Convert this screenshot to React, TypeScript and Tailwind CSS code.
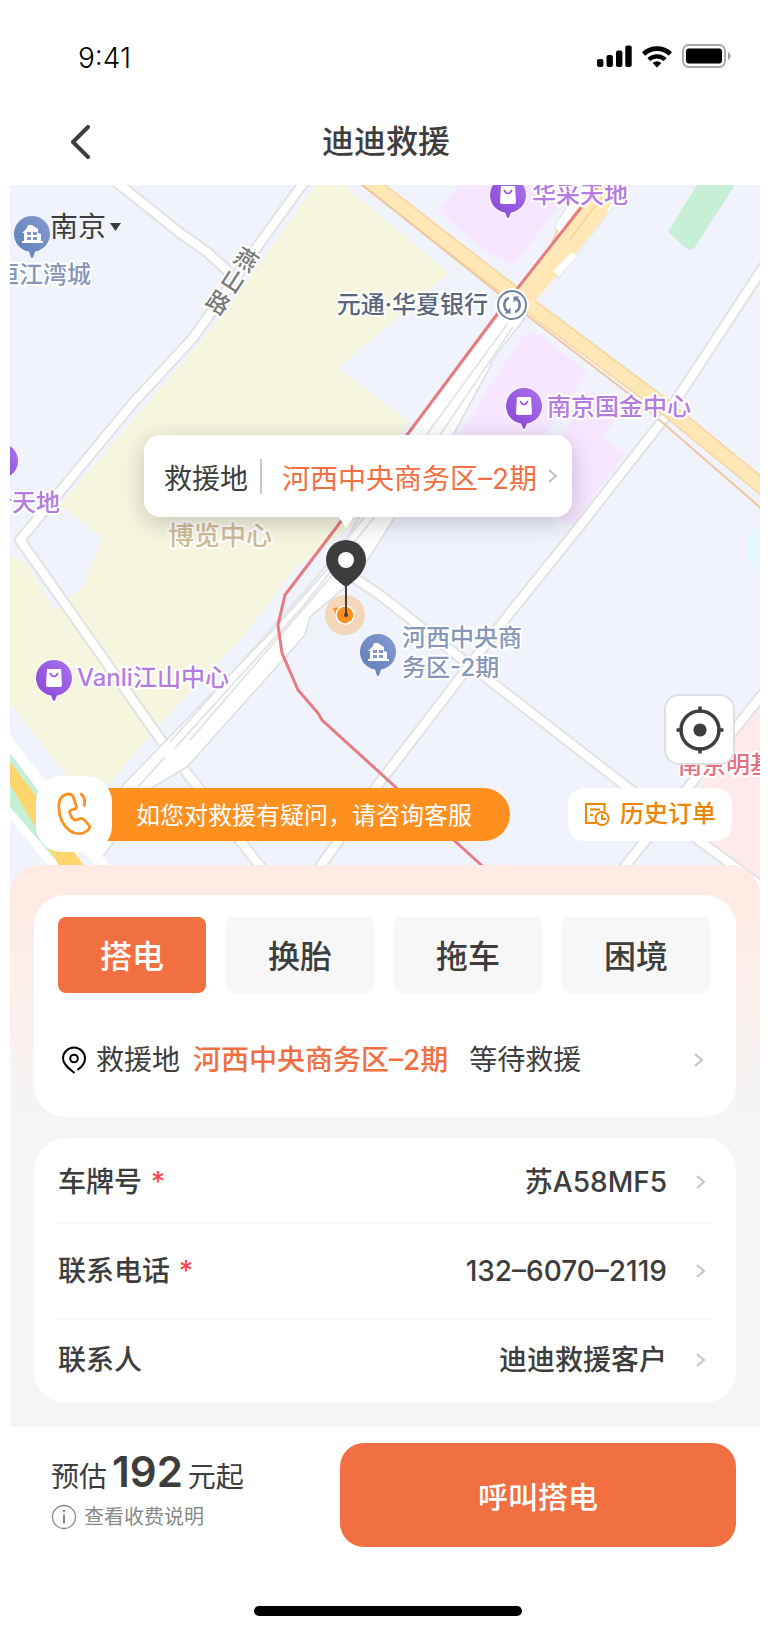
import React, { useState } from "react";

const services = ["搭电", "换胎", "拖车", "困境"];

const details = [
  { label: "车牌号", value: "苏A58MF5", required: true, height: "h-[84px] pt-1" },
  { label: "联系电话", value: "132–6070–2119", required: true, height: "h-24" },
  { label: "联系人", value: "迪迪救援客户", required: false, height: "h-[85px] pb-1" },
];

function Chevron() {
  return (
    <svg viewBox="0 0 10 14" className="h-[14px] w-[10px] shrink-0" fill="none" stroke="#c4c4c4" strokeWidth="2" aria-hidden="true">
      <path d="M1 1l7 6-7 6" />
    </svg>
  );
}

function StatusBar() {
  return (
    <div className="flex h-[82px] items-center justify-between pt-8 pr-[29px] pl-[68px]">
      <span className="pt-0.5 text-[28px] leading-none font-light text-black">9:41</span>
      <div className="flex items-center gap-[9px] pb-0.5">
        <svg viewBox="0 0 35 22" className="h-[22px] w-[35px]" aria-hidden="true">
          <rect x="0" y="14" width="6.400" height="8" rx="2" />
          <rect x="9.500" y="10" width="6.400" height="12" rx="2" />
          <rect x="19" y="5.500" width="6.400" height="16.500" rx="2" />
          <rect x="28.300" y="0.600" width="6.400" height="21.400" rx="2" />
        </svg>
        <svg viewBox="0 0 32 23" className="h-[23px] w-8" fill="none" stroke="#000" aria-hidden="true">
          <path d="M2.600 9a19.500 19.500 0 0 1 26.800 0" strokeWidth="4.600" />
          <path d="M7.800 14.600a11.900 11.900 0 0 1 16.400 0" strokeWidth="4.200" />
          <path d="M16 22.600l-4.400-4.600a6.500 6.500 0 0 1 8.800 0z" fill="#000" stroke="none" />
        </svg>
        <svg viewBox="0 0 49 24" className="h-6 w-[49px]" aria-hidden="true">
          <rect x="1" y="1" width="42" height="22" rx="5.500" fill="none" stroke="#a6a6a6" strokeWidth="1.800" />
          <rect x="4" y="4.500" width="36" height="15" rx="3" />
          <path d="M46 8v8c3.500-1.500 3.500-6.500 0-8z" fill="#a6a6a6" />
        </svg>
      </div>
    </div>
  );
}

function ShopPin({ x, y }: { x: number; y: number }) {
  return (
    <g transform={`translate(${x} ${y})`}>
      <path d="M0 25c-2 0-2.500-3-3.500-6C-13 17-19 9-19 0A19 19 0 0 1 19 0C19 9 13 17 3.500 19 2.500 22 2 25 0 25z" fill="#fff" opacity=".7" />
      <path d="M0 23c-1.500 0-1.500-3-3-5.500C-12 16-18 8.500-18 0a18 18 0 0 1 36 0C18 8.500 12 16 3 17.500 1.500 20 1.500 23 0 23z" fill="url(#shop)" />
      <path d="M-7-9H7L8 7q0 2-2 2H-6q-2 0-2-2z" fill="#fff" />
      <path d="M-4-5q4 7 8 0" fill="none" stroke="#9a5ae0" strokeWidth="1.600" />
    </g>
  );
}

function HomePin({ x, y }: { x: number; y: number }) {
  return (
    <g transform={`translate(${x} ${y})`}>
      <path d="M0 24c-1.500 0-1.500-3-3-6.500C-12 16-18 8.500-18 0a18 18 0 0 1 36 0C18 8.500 12 16 3 17.500 1.500 21 1.500 24 0 24z" fill="url(#home)" />
      <path d="M-10 7h2V-1h-2L-5-6l1-3h4l6 4v4l3 1v7h2v2h-21z" fill="#fff" />
      <path d="M-5-2h4v3h-4zM1-2h4v3H1zM-5 3h4v3h-4zM1 3h4v3H1z" fill="#7f97cb" />
    </g>
  );
}

const minorRoads = [
  "M105-4L170 48 197 67 218 86",
  "M295-4L247 62 203 125 183 153 123 218 57 298 10 355 153 558",
  "M340 390L370 410 430 457 617 602 760 708",
  "M760 72L653 235 573 337 500 428 370 597 300 696",
  "M173 583L262 696",
  "M760 500L600 700",
];

function MapDrawing() {
  return (
    <svg viewBox="0 0 750 710" preserveAspectRatio="xMidYMin slice" className="absolute inset-0 h-full w-full" aria-hidden="true">
      <defs>
        <linearGradient id="shop" x1="1" y1="0" x2="0" y2="1">
          <stop offset="0" stopColor="#a873ee" />
          <stop offset="1" stopColor="#8a43d4" />
        </linearGradient>
        <linearGradient id="home" x1="1" y1="0" x2="0" y2="1">
          <stop offset="0" stopColor="#869bd2" />
          <stop offset="1" stopColor="#5d7db8" />
        </linearGradient>
      </defs>
      <rect width="750" height="710" fill="#f0f3fb" />
      <path d="M305 0H333L370 30 439 88 370 147 328 183 398 235 340 342 283 385 267 408 230 455 203 482 147 542 100 598 57 592 0 518V374L5 372 15 377 45 425 73 403 92 352 50 320 117 242 203 142 283 32z" fill="#f6f6df" />
      <path d="M450 0L428 25 473 65 503 80 547 25 555 0z" fill="#f6e6ff" />
      <path d="M514 150Q520 146 530 150L578 188 535 250 447 252 497 175z" fill="#f6e6ff" />
      <path d="M577 208H597L610 228 593 253 615 268 566 336Q560 343 552 337L540 320 552 250z" fill="#f6e6ff" />
      <path d="M687 0H725L685 62Q682 67 676 63L658 47z" fill="#c5f0d5" />
      <path d="M750 340L738 353V375L750 387z" fill="#e2f8fc" />
      <path d="M750 522L727 548 690 602 693 655 750 698z" fill="#ffeaeb" />

      <path d="M0 550L35 595 70 650 66 690H46L0 634z" fill="#fff" />
      <path d="M0 568L28 605 60 650 56 684 48 678 0 622z" fill="#c5f0d5" />
      <path d="M0 577L27 612 80 690H55L0 600z" fill="#ffd66e" />

      <g fill="none" stroke="#e1e2e4" strokeWidth="12" strokeLinejoin="round">
        {minorRoads.map((d) => <path key={d} d={d} />)}
      </g>
      <g fill="none" stroke="#fff" strokeWidth="8" strokeLinejoin="round">
        {minorRoads.map((d) => <path key={d} d={d} />)}
      </g>

      <path d="M490 128L397 250 323 378 263 445 113 600 78 665 90 676 143 602 177 582 295 450 300 432 347 392 383 335 443 250 480 182 482 175 515 133z" fill="#fff" stroke="#dcdee1" strokeWidth="1.500" />
      <path d="M498 138L380 300 300 400 160 557M503 142L430 250 290 425 165 563" fill="none" stroke="#e4e5e8" strokeWidth="2" />
      <path d="M350 358L180 555M155 572L128 602" fill="none" stroke="#e4e5e8" strokeWidth="2" />
      <path d="M80 664L104 696" stroke="#fff" strokeWidth="12" />

      <path d="M345-14L503 108 650 218 760 308" fill="none" stroke="#fbd3a0" strokeWidth="16" />
      <path d="M345-14L503 108 650 218 760 308" fill="none" stroke="#ffe8b5" strokeWidth="13" />
      <path d="M345-6L493 112 623 212 760 331" fill="none" stroke="#eec6a0" strokeWidth="2" />
      <path d="M545 78L546 38 572 0H620L548 94z" fill="#fff" stroke="#dcdee1" />
      <path d="M505 110L552 45 583 0H609L596 30 565 70 523 118z" fill="#ffe8b5" />
      <path d="M562 67L567 71 549 91 543 86z" fill="#fff" />
      <path d="M592 12L560 54M548 45L540 62" stroke="#fbd3a0" strokeWidth="2" />
      <path d="M592-4L488 128 397 250 332 335 275 410 268 440 272 468 288 505 308 528 312 535 380 597 480 688" fill="none" stroke="#e67b82" strokeWidth="3" />

      <circle cx="502" cy="120" r="17" fill="#fff" />
      <circle cx="502" cy="120" r="14" fill="#fff" stroke="#76859e" strokeWidth="2" />
      <path d="M499 113C493 115 493 124 498 126.500M505 127C511 125 511 116 506 113.500" fill="none" stroke="#6f80a4" strokeWidth="2.600" />
      <path d="M494.500 128.500h6v-6zM509.500 111.500h-6v6z" fill="#6f80a4" />

      <ShopPin x={498} y={10} />
      <ShopPin x={514} y={221} />
      <ShopPin x={-10} y={276} />
      <ShopPin x={44} y={493} />
      <HomePin x={22} y={49} />
      <HomePin x={368} y={467} />

      <g stroke="#fff" strokeWidth="4" strokeLinejoin="round" paintOrder="stroke" fontSize="24" fontWeight="500">
        <g fill="#8797b9">
          <text x="-15" y="98">恒江湾城</text>
          <text x="392" y="461">河西中央商</text>
          <text x="392" y="491">务区-2期</text>
        </g>
        <g fill="#b47ce0">
          <text x="522" y="18">华采天地</text>
          <text x="537" y="230">南京国金中心</text>
          <text x="-22" y="326">新天地</text>
          <text x="67" y="501">Vanli江山中心</text>
        </g>
        <text x="478" y="128" fill="#5a667c" textAnchor="end">元通·华夏银行</text>
        <text x="158" y="360" fill="#d0bd97" fontSize="26">博览中心</text>
        <text x="668" y="588" fill="#e4707e">南京明基</text>
        <g fill="#7a7a7a" fontSize="23" textAnchor="middle">
          <text transform="translate(236 75) rotate(33)" y="8">燕</text>
          <text transform="translate(223 96) rotate(33)" y="8">山</text>
          <text transform="translate(208 118) rotate(33)" y="8">路</text>
        </g>
      </g>
    </svg>
  );
}

function RescueMarker() {
  return (
    <>
      <button type="button" className="absolute top-[250px] left-[134px] flex h-[82px] items-center rounded-2xl bg-white pr-[14px] pl-5 text-[28px] whitespace-nowrap text-[#3d3d3d] shadow-[0_6px_24px_rgba(0,0,0,0.2)]">
        <span className="pt-1.5">救援地</span>
        <span className="mr-5 ml-3 h-[35px] w-0.5 bg-[#c9c9c9]" />
        <span className="pt-1.5 text-[#f26f41]">河西中央商务区–2期</span>
        <span className="ml-[11px]"><Chevron /></span>
        <svg viewBox="0 0 16 12" className="absolute top-[81px] left-[194px] h-3 w-4" fill="#fff" aria-hidden="true">
          <path d="M0 0h16L8 12z" />
        </svg>
      </button>
      <svg viewBox="0 0 42 96" className="absolute top-[354px] left-[315px] h-24 w-[42px]" aria-hidden="true">
        <circle cx="20" cy="76" r="20" fill="#f4d6b9" />
        <path d="M8 69l9-1-6 9z" fill="#ff9020" />
        <circle cx="20" cy="76" r="9" fill="#ff9020" stroke="#fff" strokeWidth="1.500" />
        <path d="M21 48S1 36 1 21a20 20 0 0 1 40 0C41 36 21 48 21 48z" fill="#3d3d3d" />
        <circle cx="21" cy="21" r="8" fill="#fff" />
        <path d="M21 46v30" stroke="#3d3d3d" strokeWidth="2" />
        <circle cx="21" cy="76" r="2" fill="#3d3d3d" />
      </svg>
    </>
  );
}

function MapSection() {
  return (
    <section className="relative h-[710px] overflow-hidden" aria-label="救援地图">
      <MapDrawing />
      <button type="button" className="absolute top-[21px] left-10 flex items-center gap-1 text-[28px] text-[#3d3d3d]">
        南京
        <svg viewBox="0 0 11 8" className="h-2 w-[11px]" fill="#3d3d3d" aria-hidden="true">
          <path d="M0 0h11L5.500 8z" />
        </svg>
      </button>
      <RescueMarker />
      <button type="button" aria-label="定位" className="absolute top-[509px] right-[25px] flex size-[71px] items-center justify-center rounded-[15px] border-2 border-[#dde0e2] bg-white">
        <svg viewBox="0 0 48 48" className="size-12" fill="none" stroke="#3d3d3d" strokeWidth="3.500" aria-hidden="true">
          <circle cx="24" cy="24" r="19" />
          <path d="M24 0.500v6M24 41.500v6M0.500 24h6M41.500 24h6" />
          <circle cx="24" cy="24" r="6.600" fill="#3d3d3d" stroke="none" />
        </svg>
      </button>
      <div className="absolute inset-x-0 top-[591px] flex items-center justify-between pr-7 pl-[26px]">
        <button type="button" className="flex items-center">
          <span className="relative z-10 flex size-[76px] items-center justify-center rounded-[26px] bg-white">
            <svg viewBox="0 0 34 44" className="h-11 w-[34px]" fill="none" stroke="#ff9020" strokeWidth="2.800" strokeLinecap="round" strokeLinejoin="round" aria-hidden="true">
              <path d="M9 2.300C12 1.500 14.500 2 16 4.500C17 6.500 17.800 8 18 10.500C18.200 12 19.800 13.500 19.500 15C19.300 17 17.500 17 15.500 17.500C13 18 12 19 13 21.500C13.800 24 15.500 27.300 18 28.200C20.500 28.600 22.500 26 25 26.500C27 27 29 30 31 32C33.500 34.500 33 36.500 30.500 38.500C25 43 18 42.500 12.500 38.500C5.500 33 2 24 1.800 15C1.700 9 3.500 4 9 2.300Z" />
              <path d="M24 2C27 4.500 28.500 8.500 27.200 13.500" />
            </svg>
          </span>
          <span className="-ml-6 flex h-[53px] items-center rounded-r-full bg-[#ff9020] pt-1 pr-[38px] pl-12 text-2xl whitespace-nowrap text-white">如您对救援有疑问，请咨询客服</span>
        </button>
        <button type="button" className="flex h-[53px] items-center gap-[10px] rounded-2xl bg-white px-4 text-2xl whitespace-nowrap text-[#ee8500]">
          <svg viewBox="0 0 26 24" className="h-6 w-[26px]" fill="none" stroke="#ee8500" strokeWidth="2" aria-hidden="true">
            <path d="M20.500 9V2H2v19h10M6 7.500h10M6 13h3" />
            <circle cx="18" cy="16.500" r="6.500" />
            <path d="M18 12.500V17h4" />
          </svg>
          <span className="font-medium">历史订单</span>
        </button>
      </div>
    </section>
  );
}

export default function App() {
  const [active, setActive] = useState(0);
  return (
    <main className="bg-white px-[10px] font-['Inter','Noto_Sans_CJK_SC',sans-serif] text-[#3d3d3d]">
      <StatusBar />
      <header className="relative flex h-[103px] items-center justify-center pt-4">
        <button type="button" aria-label="返回" className="absolute left-[60px]">
          <svg viewBox="0 0 20 34" className="h-[34px] w-5" fill="none" stroke="#3d3d3d" strokeWidth="4" strokeLinecap="round" strokeLinejoin="round" aria-hidden="true">
            <path d="M18 2L3 17l15 15" />
          </svg>
        </button>
        <h1 className="pl-0.5 text-[32px] leading-none font-medium">迪迪救援</h1>
      </header>
      <MapSection />

      <section className="relative -mt-[30px] flex flex-col gap-[21px] rounded-t-[30px] bg-[linear-gradient(180deg,#ffebe4_0px,#ffebe4_40px,#f5f5f5_250px)] px-6 pt-[30px] pb-6">
        <div className="rounded-[32px] bg-white px-6 pt-[22px] pb-[22px]">
          <div className="grid grid-cols-4 gap-5 pr-0.5">
            {services.map((name, i) => (
              <button
                key={name}
                type="button"
                aria-pressed={i === active}
                onClick={() => setActive(i)}
                className={`h-[76px] rounded-lg pt-1 text-[32px] font-medium ${i === active ? "bg-[#f26f41] text-white" : "bg-[#f7f7f7] text-[#3d3d3d]"}`}
              >
                {name}
              </button>
            ))}
          </div>
          <button type="button" className="mt-8 flex h-[70px] w-full items-center pr-2 pl-[3px] text-[28px] whitespace-nowrap">
            <svg viewBox="0 0 26 28" className="h-7 w-[26px] shrink-0" fill="none" stroke="#000" strokeWidth="2" strokeLinecap="round" aria-hidden="true">
              <path d="M13 26.500C8 22.500 2 18.500 2 12.500a11 11 0 0 1 22 0C24 17 20.500 21 17 23.500" />
              <circle cx="13" cy="12.500" r="3.800" />
            </svg>
            <span className="ml-[9px]">救援地</span>
            <span className="ml-[13px] font-medium text-[#f26f41]">河西中央商务区–2期</span>
            <span className="ml-[21px]">等待救援</span>
            <span className="ml-auto"><Chevron /></span>
          </button>
        </div>

        <div className="rounded-[32px] bg-white px-6">
          {details.map((row, i) => (
            <button
              key={row.label}
              type="button"
              className={`${row.height} flex w-full items-center pr-1.5 text-[28px] font-medium whitespace-nowrap ${i > 0 ? "border-t-2 border-[#f7f7f7]" : ""}`}
            >
              <span>{row.label}</span>
              {row.required && <span className="ml-[9px] font-normal text-[#ff4040]">*</span>}
              <span className="mr-[29px] ml-auto">{row.value}</span>
              <Chevron />
            </button>
          ))}
        </div>
      </section>

      <footer className="flex items-start justify-between pt-4 pr-6 pl-[41px]">
        <div className="flex flex-col pt-[3px]">
          <p className="flex items-baseline text-[28px] leading-[52px]">
            预估<strong className="mx-[5px] text-[42px] font-semibold">192</strong>元起
          </p>
          <a href="#fees" className="flex items-center gap-[7px] text-xl text-[#888]">
            <svg viewBox="0 0 26 26" className="size-[26px]" fill="none" stroke="#888" strokeWidth="1.300" aria-hidden="true">
              <circle cx="13" cy="13" r="11.500" />
              <path d="M13 10.500v9" strokeWidth="2" />
              <circle cx="13" cy="7" r="1.300" fill="#888" stroke="none" />
            </svg>
            查看收费说明
          </a>
        </div>
        <button type="button" className="h-[104px] w-[396px] rounded-3xl bg-[#f26f41] pt-1 text-[30px] font-medium text-white">呼叫搭电</button>
      </footer>
      <div className="flex justify-center pt-[59px] pb-[27px] pl-1.5">
        <div className="h-[10px] w-[268px] rounded-full bg-black" />
      </div>
    </main>
  );
}
